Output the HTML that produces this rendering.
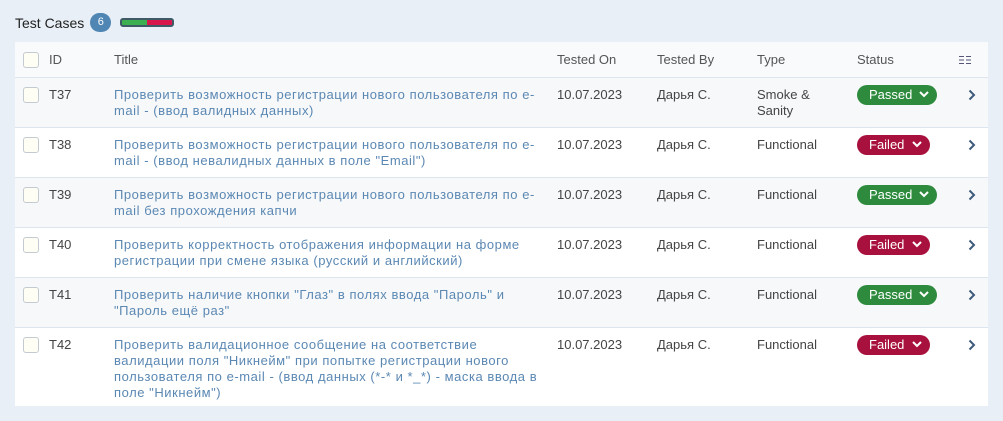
<!DOCTYPE html>
<html><head><meta charset="utf-8"><style>
*{margin:0;padding:0;box-sizing:border-box}
body{width:1003px;height:421px;background:#e8eff7;font-family:"Liberation Sans",sans-serif;font-size:13px;color:#444;position:relative;overflow:hidden}
.hdr{position:absolute;left:15px;top:13px;display:flex;align-items:center}
.hdr b{font-weight:normal;color:#222;font-size:14px}
.badge{margin-left:6px;width:21px;height:19px;border-radius:10px;background:#4f86b4;color:#fff;font-size:11px;text-align:center;line-height:19px}
.bar{margin-left:9px;width:54px;height:9px;border:2px solid #3d5a66;border-radius:3px;background:linear-gradient(90deg,#3cb050 50%,#d8164c 50%)}
.tbl{position:absolute;left:15px;top:42px;width:973px;height:364px;background:#fff}
.row{position:absolute;left:0;width:973px;border-top:1px solid #dde5ee}
.h{top:0;height:35px;background:#f8fafc;border-top:none;color:#555}
.c{position:absolute;line-height:16px;white-space:nowrap}
.cb{position:absolute;left:8px;width:16px;height:16px;border:1px solid #c3cad2;border-radius:3px;background:#fffef5}
.t{left:99px;color:#5b88b3;letter-spacing:0.55px}
.st{position:absolute;left:842px;height:20px;border-radius:10px;color:#fff;font-size:13px;line-height:20px;padding-left:12px}
.p{background:#2e8b3e;width:80px}.f{background:#a8103e;width:73px}
.st svg{position:absolute;right:8px;top:6px}
.ch{position:absolute;left:953px}
.alt{background:#f7f8fa}
</style></head><body>
<div class="hdr"><b>Test Cases</b><span class="badge">6</span><span class="bar"></span></div>
<div class="tbl">
<div class="row h"><div class="cb" style="top:10px"></div><div class="c" style="left:34px;top:10px">ID</div><div class="c" style="left:99px;top:10px">Title</div><div class="c" style="left:542px;top:10px">Tested On</div><div class="c" style="left:642px;top:10px">Tested By</div><div class="c" style="left:742px;top:10px">Type</div><div class="c" style="left:842px;top:10px">Status</div>
<svg class="ch" style="left:944px;top:13px" width="12" height="10"><g stroke="#557" stroke-width="1"><path d="M0 1.5h5M7 1.5h5M0 5h5M7 5h5M0 8.5h5M7 8.5h5"/></g></svg></div>

<div class="row alt" style="top:35px;height:50px"><div class="cb" style="top:9px"></div><div class="c" style="left:34px;top:9px">T37</div><div class="c t" style="top:9px">Проверить возможность регистрации нового пользователя по e-<br>mail - (ввод валидных данных)</div><div class="c" style="left:542px;top:9px">10.07.2023</div><div class="c" style="left:642px;top:9px">Дарья С.</div><div class="c" style="left:742px;top:9px">Smoke &amp;<br>Sanity</div><div class="st p" style="top:7px">Passed<svg width="10" height="8"><path d="M1 1l4 4 4-4" stroke="#fff" stroke-width="2" fill="none"/></svg></div><svg class="ch" style="top:11px" width="8" height="12"><path d="M1.5 1.5l4.5 4.5-4.5 4.5" stroke="#3d5a7a" stroke-width="2" fill="none"/></svg></div>

<div class="row" style="top:85px;height:50px"><div class="cb" style="top:9px"></div><div class="c" style="left:34px;top:9px">T38</div><div class="c t" style="top:9px">Проверить возможность регистрации нового пользователя по e-<br>mail - (ввод невалидных данных в поле "Email")</div><div class="c" style="left:542px;top:9px">10.07.2023</div><div class="c" style="left:642px;top:9px">Дарья С.</div><div class="c" style="left:742px;top:9px">Functional</div><div class="st f" style="top:7px">Failed<svg width="10" height="8"><path d="M1 1l4 4 4-4" stroke="#fff" stroke-width="2" fill="none"/></svg></div><svg class="ch" style="top:11px" width="8" height="12"><path d="M1.5 1.5l4.5 4.5-4.5 4.5" stroke="#3d5a7a" stroke-width="2" fill="none"/></svg></div>

<div class="row alt" style="top:135px;height:50px"><div class="cb" style="top:9px"></div><div class="c" style="left:34px;top:9px">T39</div><div class="c t" style="top:9px">Проверить возможность регистрации нового пользователя по e-<br>mail без прохождения капчи</div><div class="c" style="left:542px;top:9px">10.07.2023</div><div class="c" style="left:642px;top:9px">Дарья С.</div><div class="c" style="left:742px;top:9px">Functional</div><div class="st p" style="top:7px">Passed<svg width="10" height="8"><path d="M1 1l4 4 4-4" stroke="#fff" stroke-width="2" fill="none"/></svg></div><svg class="ch" style="top:11px" width="8" height="12"><path d="M1.5 1.5l4.5 4.5-4.5 4.5" stroke="#3d5a7a" stroke-width="2" fill="none"/></svg></div>

<div class="row" style="top:185px;height:50px"><div class="cb" style="top:9px"></div><div class="c" style="left:34px;top:9px">T40</div><div class="c t" style="top:9px">Проверить корректность отображения информации на форме<br>регистрации при смене языка (русский и английский)</div><div class="c" style="left:542px;top:9px">10.07.2023</div><div class="c" style="left:642px;top:9px">Дарья С.</div><div class="c" style="left:742px;top:9px">Functional</div><div class="st f" style="top:7px">Failed<svg width="10" height="8"><path d="M1 1l4 4 4-4" stroke="#fff" stroke-width="2" fill="none"/></svg></div><svg class="ch" style="top:11px" width="8" height="12"><path d="M1.5 1.5l4.5 4.5-4.5 4.5" stroke="#3d5a7a" stroke-width="2" fill="none"/></svg></div>

<div class="row alt" style="top:235px;height:50px"><div class="cb" style="top:9px"></div><div class="c" style="left:34px;top:9px">T41</div><div class="c t" style="top:9px">Проверить наличие кнопки "Глаз" в полях ввода "Пароль" и<br>"Пароль ещё раз"</div><div class="c" style="left:542px;top:9px">10.07.2023</div><div class="c" style="left:642px;top:9px">Дарья С.</div><div class="c" style="left:742px;top:9px">Functional</div><div class="st p" style="top:7px">Passed<svg width="10" height="8"><path d="M1 1l4 4 4-4" stroke="#fff" stroke-width="2" fill="none"/></svg></div><svg class="ch" style="top:11px" width="8" height="12"><path d="M1.5 1.5l4.5 4.5-4.5 4.5" stroke="#3d5a7a" stroke-width="2" fill="none"/></svg></div>

<div class="row" style="top:285px;height:79px"><div class="cb" style="top:9px"></div><div class="c" style="left:34px;top:9px">T42</div><div class="c t" style="top:9px">Проверить валидационное сообщение на соответствие<br>валидации поля "Никнейм" при попытке регистрации нового<br>пользователя по e-mail - (ввод данных (*-* и *_*) - маска ввода в<br>поле "Никнейм")</div><div class="c" style="left:542px;top:9px">10.07.2023</div><div class="c" style="left:642px;top:9px">Дарья С.</div><div class="c" style="left:742px;top:9px">Functional</div><div class="st f" style="top:7px">Failed<svg width="10" height="8"><path d="M1 1l4 4 4-4" stroke="#fff" stroke-width="2" fill="none"/></svg></div><svg class="ch" style="top:11px" width="8" height="12"><path d="M1.5 1.5l4.5 4.5-4.5 4.5" stroke="#3d5a7a" stroke-width="2" fill="none"/></svg></div>
</div>
</body></html>
